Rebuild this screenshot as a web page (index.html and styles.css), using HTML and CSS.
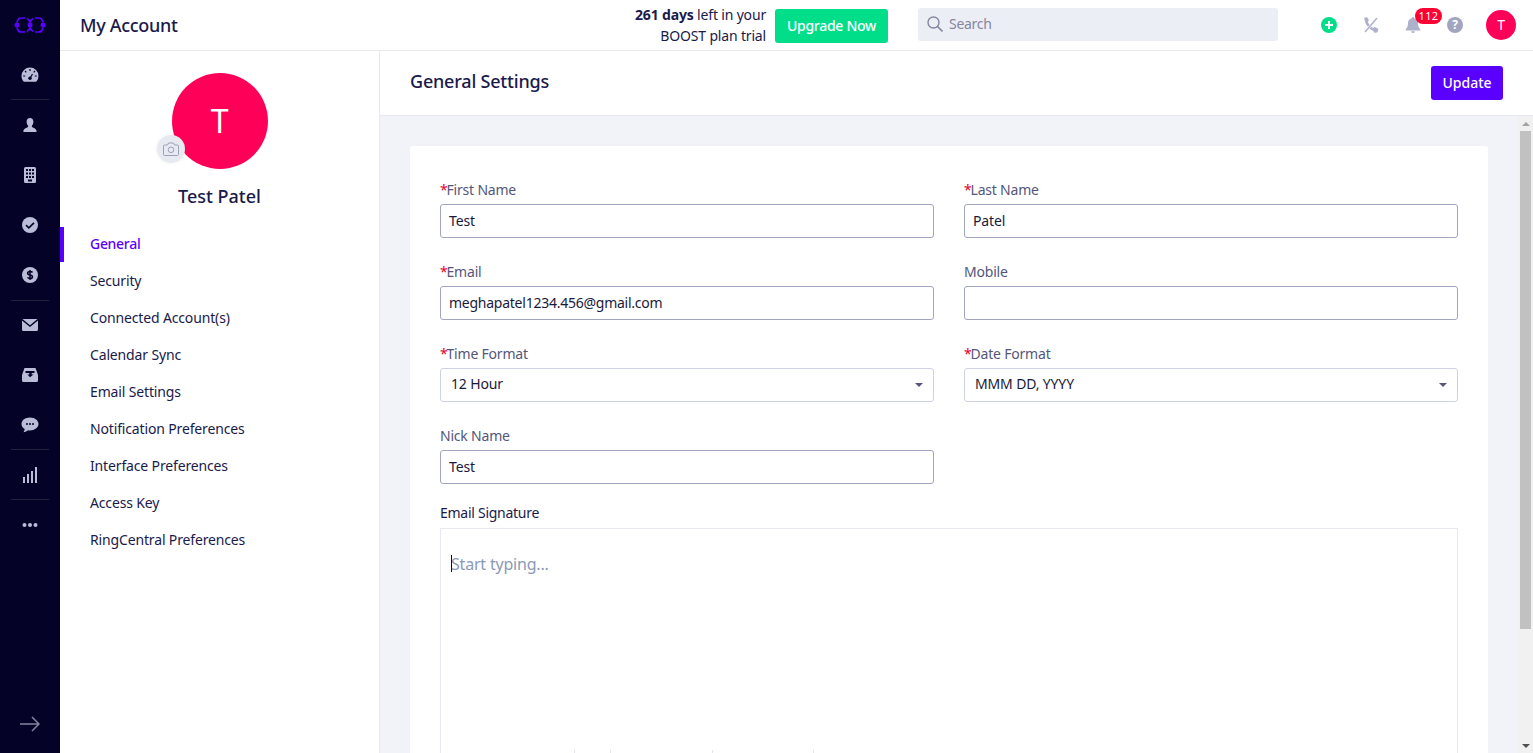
FILE: index.html
```html
<!DOCTYPE html>
<html lang="en">
<head>
  <meta charset="UTF-8">
  <meta name="viewport" content="width=device-width, initial-scale=1.0">
  <title>My Account</title>
  <link rel="stylesheet" href="styles.css">
</head>
<body>
  <div class="app">

    <!-- Icon rail -->
    <nav class="rail">
      <div class="rail-logo">
        <svg width="32" height="16" viewBox="0 0 32 16">
          <g fill="none" stroke="#5a00ff" stroke-width="1.700">
            <path d="M3 5.500C3.500 2.500 5 1 7.500 1H11"/>
            <path d="M13 1.500c1.500.8 2.500 2 3 4"/>
            <path d="M16 5.500c.5-2 1.500-3.200 3-4"/>
            <path d="M21 1h3.500c2.500 0 4 1.500 4.500 4.500"/>
            <path d="M3 10.500c.5 3 2 4.500 4.500 4.500H11"/>
            <path d="M13 14.500c1.500-.8 2.500-2 3-4"/>
            <path d="M16 10.500c.5 2 1.500 3.200 3 4"/>
            <path d="M21 15h3.500c2.500 0 4-1.500 4.500-4.500"/>
          </g>
          <circle cx="3" cy="8" r="2.500" fill="#5a00ff"/>
          <circle cx="16" cy="8" r="2.500" fill="#5a00ff"/>
          <circle cx="29" cy="8" r="2.500" fill="#5a00ff"/>
        </svg>
      </div>
      <div class="rail-item">
        <svg width="18" height="16" viewBox="0 0 18 16"><path fill="#b9bdd8" d="M9 0.500A8.500 8.500 0 0 0 .5 9c0 2 .6 3.700 1.800 5.200.3.300.6.500 1 .5h11.400c.4 0 .7-.2 1-.5A8.300 8.300 0 0 0 17.500 9 8.500 8.500 0 0 0 9 .5z"/><path stroke="#050228" stroke-width="1.200" d="M9 2v2M4 4l1.300 1.300M14 4l-1.300 1.300M2.200 9h2M13.800 9h2M9.200 11l2.300-4"/><circle cx="9" cy="11.300" r="1.700" fill="#050228"/></svg>
      </div>
      <div class="rail-sep"></div>
      <div class="rail-item">
        <svg width="14" height="14" viewBox="0 0 14 14"><path fill="#b9bdd8" d="M7 0C4.900 0 3.600 1.600 3.600 3.800c0 1.700.7 3 1.500 3.900v1.200C3.500 9.800.5 10.600.3 13.300c0 .4.300.7.700.7h12c.4 0 .7-.3.700-.7-.2-2.700-3.200-3.500-4.800-4.400V7.700c.8-.9 1.500-2.200 1.500-3.900C10.400 1.600 9.100 0 7 0z"/></svg>
      </div>
      <div class="rail-item">
        <svg width="14" height="16" viewBox="0 0 14 16"><rect x="1" y="0" width="12" height="16" rx="1.500" fill="#b9bdd8"/><g fill="#050228"><rect x="3" y="2" width="2" height="2"/><rect x="6" y="2" width="2" height="2"/><rect x="9" y="2" width="2" height="2"/><rect x="3" y="5.500" width="2" height="2"/><rect x="6" y="5.500" width="2" height="2"/><rect x="9" y="5.500" width="2" height="2"/><rect x="3" y="9" width="2" height="2"/><rect x="6" y="9" width="2" height="2"/><rect x="9" y="9" width="2" height="2"/><rect x="5" y="12.500" width="4" height="2"/></g></svg>
      </div>
      <div class="rail-item">
        <svg width="16" height="16" viewBox="0 0 16 16"><circle cx="8" cy="8" r="8" fill="#b9bdd8"/><path fill="none" stroke="#050228" stroke-width="1.600" d="M4 8.200l2.800 2.600L12 5.800"/></svg>
      </div>
      <div class="rail-item">
        <svg width="16" height="16" viewBox="0 0 16 16"><circle cx="8" cy="8" r="8" fill="#b9bdd8"/><path fill="none" stroke="#050228" stroke-width="1.500" d="M10.500 5.500C10 4.700 9 4.500 8 4.500c-1.300 0-2.400.6-2.400 1.800C5.600 8.900 10.500 7.200 10.500 9.700c0 1.200-1.200 1.800-2.500 1.800-1.100 0-2-.3-2.600-1.100M8 3v10"/></svg>
      </div>
      <div class="rail-sep rail-sep-low"></div>
      <div class="rail-item">
        <svg width="16" height="12" viewBox="0 0 16 12"><path fill="#b9bdd8" d="M.5 0h15L8 6.200zM0 1.500v9C0 11.400.6 12 1.500 12h13c.9 0 1.500-.6 1.500-1.500v-9L8 8z"/></svg>
      </div>
      <div class="rail-item">
        <svg width="16" height="14" viewBox="0 0 16 14"><path fill="#b9bdd8" d="M2.500 0h11L16 7v5.500c0 .9-.6 1.500-1.500 1.500h-13C.6 14 0 13.400 0 12.500V7z"/><path fill="#050228" d="M3.500 3h9v2h-2.800v1.500h1.800L8 9.300 5.500 6.500h1.800V5H3.500z"/></svg>
      </div>
      <div class="rail-item">
        <svg width="18" height="16" viewBox="0 0 18 16"><path fill="#b9bdd8" d="M9 .5C4.300.5.500 3.300.5 7c0 2.100 1.300 3.900 3.200 5.100-.1 1.100-.6 2.300-1.200 3.100 1.700-.2 3.300-1 4.400-2 .7.100 1.400.2 2.100.2 4.700 0 8.500-2.800 8.500-6.400S13.700.5 9 .5z"/><g fill="#050228"><circle cx="6" cy="7" r="1"/><circle cx="9" cy="7" r="1"/><circle cx="12" cy="7" r="1"/></g></svg>
      </div>
      <div class="rail-sep"></div>
      <div class="rail-item">
        <svg width="14" height="16" viewBox="0 0 14 16"><g fill="#b9bdd8"><rect x="0" y="10" width="2" height="6"/><rect x="4" y="7" width="2" height="9"/><rect x="8" y="4" width="2" height="12"/><rect x="12" y="0" width="2" height="16"/></g></svg>
      </div>
      <div class="rail-sep"></div>
      <div class="rail-item">
        <svg width="16" height="4" viewBox="0 0 16 4"><g fill="#b9bdd8"><circle cx="2.500" cy="2" r="2"/><circle cx="8" cy="2" r="2"/><circle cx="13.500" cy="2" r="2"/></g></svg>
      </div>
      <div class="rail-expand">
        <svg width="20" height="16" viewBox="0 0 20 16"><path fill="none" stroke="#85849f" stroke-width="1.500" d="M0 8h19M12 1l7 7-7 7"/></svg>
      </div>
    </nav>

    <div class="main">
      <!-- Top bar -->
      <header class="topbar">
        <h1 class="page-title">My Account</h1>
        <div class="trial"><b>261 days</b> left in your<br>BOOST plan trial</div>
        <button class="btn-upgrade">Upgrade Now</button>
        <div class="search">
          <svg width="16" height="16" viewBox="0 0 16 16"><circle cx="6.500" cy="6.500" r="5.500" fill="none" stroke="#85869f" stroke-width="1.400"/><path stroke="#85869f" stroke-width="1.600" d="M10.500 10.500l5 5"/></svg>
          <span>Search</span>
        </div>
        <div class="top-icons">
          <svg class="ic-plus" width="16" height="16" viewBox="0 0 16 16"><circle cx="8" cy="8" r="8" fill="#00de8a"/><path stroke="#fff" stroke-width="2" d="M8 4v8M4 8h8"/></svg>
          <svg class="ic-phone" width="16" height="16" viewBox="0 0 16 16"><path fill="none" stroke="#aeb1cc" stroke-width="2.600" d="M3 3c.5 4.500 5 9.500 10 10.500"/><path fill="#aeb1cc" d="M1 1.200L4 0l2 3.300L3 6zM9.500 12.300l2-2.600 4 2.400-1.200 3.400-3 .2z"/><path stroke="#fff" stroke-width="2.500" d="M14 1L2 15"/><path stroke="#aeb1cc" stroke-width="1.500" d="M14 1L2 15"/></svg>
          <div class="bell">
            <svg width="16" height="16" viewBox="0 0 16 16"><path fill="#aeb1cc" d="M8 0c-.7 0-1.200.5-1.200 1.200C4.300 1.800 3 3.800 3 6.200c0 3.300-1 4.600-2.300 6v1.300h14.600v-1.300c-1.300-1.400-2.300-2.700-2.300-6 0-2.400-1.300-4.400-3.800-5C9.200.5 8.700 0 8 0zM6 14.300a2 1.700 0 0 0 4 0z"/></svg>
            <span class="badge">112</span>
          </div>
          <div class="ic-help">?</div>
          <div class="avatar-small">T</div>
        </div>
      </header>

      <div class="body">
        <!-- Settings menu -->
        <aside class="side">
          <div class="profile">
            <div class="avatar-wrap">
              <div class="avatar-big">T</div>
              <div class="camera">
                <svg width="16" height="14" viewBox="0 0 16 14"><path fill="none" stroke="#9da0b8" stroke-width="1" d="M1.500 3H4.500L5.500 1h5l1 2h3c.6 0 1 .4 1 1v8.500c0 .6-.4 1-1 1h-13c-.6 0-1-.4-1-1V4c0-.6.4-1 1-1z"/><circle cx="8" cy="7.800" r="2.800" fill="none" stroke="#9da0b8"/></svg>
              </div>
            </div>
            <div class="profile-name">Test Patel</div>
          </div>
          <ul class="menu">
            <li class="active">General</li>
            <li>Security</li>
            <li>Connected Account(s)</li>
            <li>Calendar Sync</li>
            <li>Email Settings</li>
            <li>Notification Preferences</li>
            <li>Interface Preferences</li>
            <li>Access Key</li>
            <li>RingCentral Preferences</li>
          </ul>
        </aside>

        <section class="content">
          <div class="content-head">
            <h2>General Settings</h2>
            <button class="btn-update">Update</button>
          </div>
          <div class="scroller">
            <div class="scroll-area">
              <form class="card">
                <div class="form-grid">
                  <div class="field">
                    <label><i>*</i>First Name</label>
                    <div class="input">Test</div>
                  </div>
                  <div class="field">
                    <label><i>*</i>Last Name</label>
                    <div class="input">Patel</div>
                  </div>
                  <div class="field">
                    <label><i>*</i>Email</label>
                    <div class="input input-email">meghapatel1234.456@gmail.com</div>
                  </div>
                  <div class="field">
                    <label>Mobile</label>
                    <div class="input"></div>
                  </div>
                  <div class="field">
                    <label><i>*</i>Time Format</label>
                    <div class="input select">12 Hour</div>
                  </div>
                  <div class="field">
                    <label><i>*</i>Date Format</label>
                    <div class="input select">MMM DD, YYYY</div>
                  </div>
                  <div class="field">
                    <label>Nick Name</label>
                    <div class="input">Test</div>
                  </div>
                </div>
                <div class="signature-label">Email Signature</div>
                <div class="signature">
                  <span class="caret"></span>Start typing...
                  <div class="sig-toolbar"><span></span><span></span><span></span><span></span></div>
                </div>
              </form>
            </div>
            <div class="scrollbar">
              <span class="arrow-up"></span>
              <div class="thumb"></div>
              <span class="arrow-down"></span>
            </div>
          </div>
        </section>
      </div>
    </div>
  </div>
</body>
</html>
```

FILE: styles.css
```css
* {
  margin: 0;
  padding: 0;
  box-sizing: border-box;
}

html, body {
  height: 100%;
  overflow: hidden;
  font-family: "Noto Sans", Arial, sans-serif;
  font-size: 14px;
  letter-spacing: -0.15px;
  color: #1a1a4b;
}

.app {
  display: flex;
  height: 753px;
}

/* Icon rail */
.rail {
  width: 60px;
  background-color: #050228;
  display: flex;
  flex-direction: column;
  align-items: center;
  flex-shrink: 0;
}

.rail-logo {
  height: 50px;
  display: flex;
  align-items: center;
  justify-content: center;
}

.rail-item {
  height: 50px;
  width: 100%;
  display: flex;
  align-items: center;
  justify-content: center;
}

.rail-sep {
  width: 38px;
  height: 1px;
  margin-top: -1px;
  background-color: #24213f;
}

.rail-sep-low {
  margin-top: 0;
  margin-bottom: -1px;
}

.rail-expand {
  margin-top: auto;
  height: 58px;
  display: flex;
  align-items: center;
  justify-content: center;
}

.main {
  flex: 1;
  min-width: 0;
  display: flex;
  flex-direction: column;
}

/* Top bar */
.topbar {
  height: 51px;
  border-bottom: 1px solid #e8e8f3;
  display: flex;
  align-items: center;
  padding-left: 20px;
  background-color: #fff;
}

.page-title {
  font-size: 18px;
  font-weight: 500;
  letter-spacing: -0.3px;
  margin-right: auto;
}

.trial {
  font-size: 14px;
  line-height: 21px;
  letter-spacing: -0.17px;
  text-align: right;
  margin-right: 9px;
}

.btn-upgrade {
  width: 113px;
  height: 34px;
  margin-top: 2px;
  padding-bottom: 2px;
  background-color: #00de8a;
  color: white;
  border: none;
  border-radius: 3px;
  font-family: inherit;
  font-size: 14px;
  font-weight: 500;
  letter-spacing: -0.3px;
}

.search {
  width: 360px;
  height: 33px;
  margin-left: 30px;
  margin-bottom: 1px;
  padding-bottom: 2px;
  background-color: #eceef6;
  border-radius: 3px;
  display: flex;
  align-items: center;
  gap: 6px;
  padding-left: 9px;
  color: #85869f;
}

.search span {
  letter-spacing: -0.3px;
}

.top-icons {
  display: flex;
  align-items: center;
  margin-left: 43px;
  width: 212px;
  height: 100%;
  padding-bottom: 1px;
  position: relative;
}

.ic-plus {
  margin-right: 26px;
}

.ic-phone {
  margin-right: 26px;
}

.bell {
  position: relative;
  width: 16px;
  height: 16px;
  margin-right: 26px;
}

.badge {
  position: absolute;
  top: -9px;
  left: 10px;
  width: 27px;
  height: 16px;
  border-radius: 8px;
  background-color: #ff0033;
  color: white;
  font-size: 11px;
  letter-spacing: 0.3px;
  line-height: 16px;
  text-align: center;
}

.ic-help {
  width: 16px;
  height: 16px;
  border-radius: 50%;
  background-color: #a2a5c0;
  color: white;
  font-size: 12px;
  font-weight: 700;
  line-height: 16px;
  text-align: center;
  margin-right: 23px;
}

.avatar-small {
  width: 30px;
  height: 30px;
  border-radius: 50%;
  background-color: #ff0059;
  color: white;
  text-align: center;
  line-height: 30px;
  font-size: 14px;
}

.body {
  flex: 1;
  display: flex;
  min-height: 0;
}

/* Settings menu */
.side {
  width: 320px;
  flex-shrink: 0;
  background-color: #fff;
  border-right: 1px solid #e8e8f3;
}

.profile {
  display: flex;
  flex-direction: column;
  align-items: center;
  padding-top: 22px;
}

.avatar-wrap {
  position: relative;
  width: 96px;
  height: 96px;
}

.avatar-big {
  width: 96px;
  height: 96px;
  border-radius: 50%;
  background-color: #ff0059;
  color: white;
  text-align: center;
  line-height: 96px;
  font-size: 32px;
}

.camera {
  position: absolute;
  left: -15px;
  top: 62px;
  width: 28px;
  height: 28px;
  border-radius: 50%;
  background-color: #e8eaf1;
  box-shadow: 0 0 4px rgba(0, 0, 0, 0.06);
  display: flex;
  align-items: center;
  justify-content: center;
}

.profile-name {
  margin-top: 14px;
  font-size: 18px;
  font-weight: 500;
  letter-spacing: 0;
  line-height: 26px;
}

.menu {
  list-style: none;
  margin-top: 18px;
}

.menu li {
  height: 37px;
  line-height: 33px;
  padding-left: 30px;
}

.menu li.active {
  color: #5a00ff;
  font-weight: 500;
  letter-spacing: -0.3px;
  border-left: 4px solid #5a00ff;
  padding-left: 26px;
  height: 35px;
  margin-bottom: 2px;
}

/* Content */
.content {
  flex: 1;
  min-width: 0;
  display: flex;
  flex-direction: column;
}

.content-head {
  height: 65px;
  flex-shrink: 0;
  background-color: #fff;
  border-bottom: 1px solid #e8e8f3;
  display: flex;
  align-items: center;
  justify-content: space-between;
  padding: 0 30px;
}

.content-head h2 {
  font-size: 18px;
  font-weight: 500;
  letter-spacing: -0.2px;
  margin-bottom: 4px;
}

.btn-update {
  width: 72px;
  height: 34px;
  padding-bottom: 2px;
  background-color: #5a00ff;
  color: white;
  border: none;
  border-radius: 3px;
  font-family: inherit;
  font-size: 14px;
  font-weight: 500;
}

.scroller {
  flex: 1;
  min-height: 0;
  display: flex;
  background-color: #f1f3f8;
}

.scroll-area {
  flex: 1;
  min-width: 0;
  overflow: hidden;
  padding: 30px 30px 0;
}

.card {
  background-color: #fff;
  border-radius: 2px;
  padding: 30px 30px 0;
  height: 800px;
}

.form-grid {
  display: grid;
  grid-template-columns: 494px 494px;
  column-gap: 30px;
  row-gap: 20px;
}

.field label {
  display: block;
  height: 28px;
  line-height: 28px;
  letter-spacing: -0.2px;
  color: #54567a;
}

.field label i {
  color: #e8002e;
  font-style: normal;
  margin-right: -1px;
}

.input {
  height: 34px;
  border: 1px solid #a2a5c0;
  border-radius: 3px;
  padding: 0 8px;
  line-height: 32px;
  color: #1a1a3b;
}

.input-email {
  letter-spacing: -0.25px;
}

.input.select {
  border-color: #cfd2e6;
  padding-left: 10px;
  line-height: 30px;
  position: relative;
}

.input.select::after {
  content: "";
  position: absolute;
  right: 10px;
  top: 14px;
  border-left: 4px solid transparent;
  border-right: 4px solid transparent;
  border-top: 4px solid #54567a;
}

.signature-label {
  margin-top: 16px;
  height: 28px;
  line-height: 26px;
  letter-spacing: -0.27px;
}

.signature {
  height: 300px;
  border: 1px solid #e8e8f3;
  padding: 24px 10px;
  font-size: 16px;
  letter-spacing: -0.2px;
  line-height: 22px;
  color: #8a9ab5;
  position: relative;
}

.caret {
  position: absolute;
  left: 10px;
  top: 26px;
  width: 1px;
  height: 17px;
  background-color: #111;
}

.sig-toolbar {
  position: absolute;
  top: 221px;
  left: 133px;
  display: flex;
}

.sig-toolbar span {
  width: 1px;
  height: 20px;
  background-color: #e4e4ea;
}

.sig-toolbar span:nth-child(2) {
  margin-left: 35px;
}

.sig-toolbar span:nth-child(3) {
  margin-left: 101px;
}

.sig-toolbar span:nth-child(4) {
  margin-left: 100px;
}

/* Scrollbar */
.scrollbar {
  width: 15px;
  flex-shrink: 0;
  background-color: #f1f1f1;
  position: relative;
}

.thumb {
  position: absolute;
  top: 15px;
  left: 2px;
  right: 2px;
  height: 498px;
  background-color: #c1c1c1;
}

.arrow-up {
  position: absolute;
  top: 6px;
  left: 4px;
  border-left: 4px solid transparent;
  border-right: 4px solid transparent;
  border-bottom: 4px solid #a3a3a3;
}

.arrow-down {
  position: absolute;
  bottom: 5px;
  left: 4px;
  border-left: 4px solid transparent;
  border-right: 4px solid transparent;
  border-top: 4px solid #505050;
}
```
